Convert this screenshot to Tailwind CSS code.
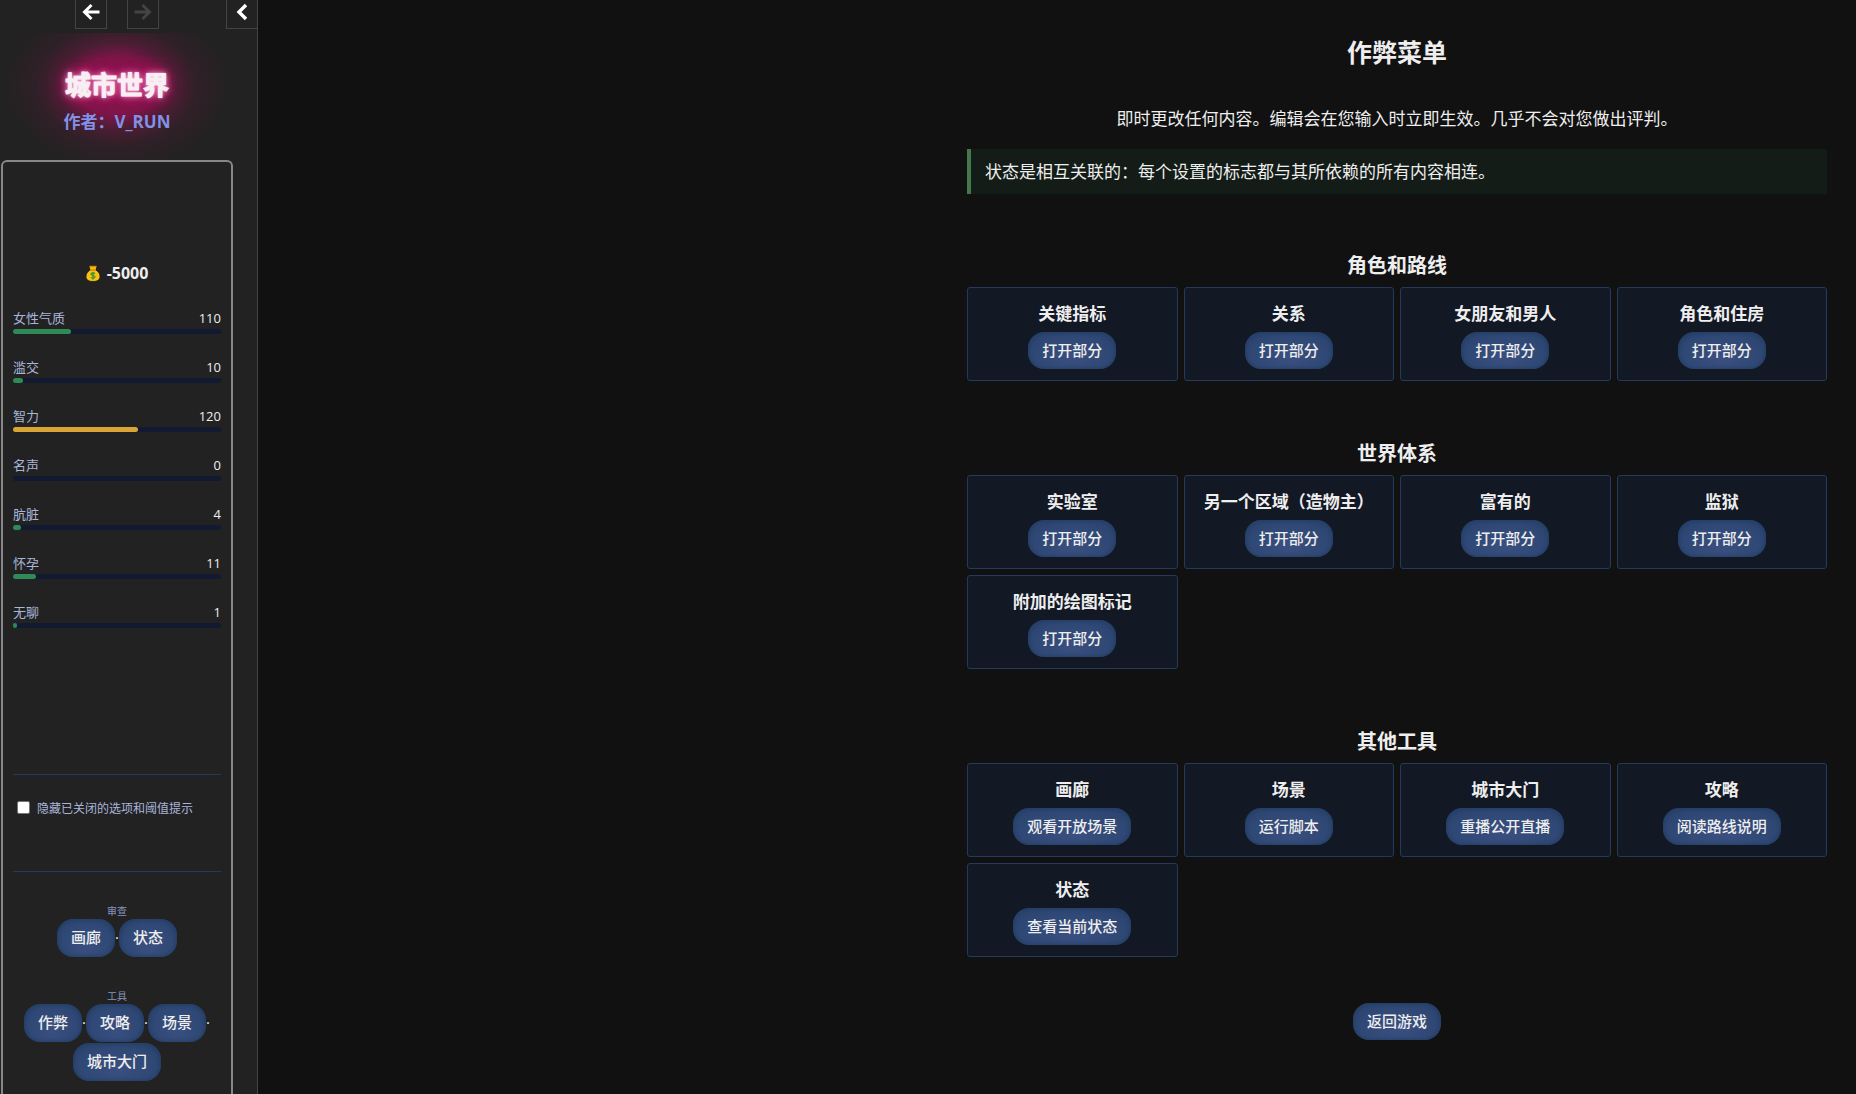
<!DOCTYPE html>
<html lang="zh-CN">
<head>
    <meta charset="UTF-8">
    <meta name="viewport" content="width=device-width, initial-scale=1.0">
    <title>城市世界</title>
    <script src="https://cdn.jsdelivr.net/npm/@tailwindcss/browser@4"></script>
    <style>
        body { font-family: "Open Sans", "Noto Sans CJK SC", sans-serif; }
        .neon { text-shadow: 0 0 2px #fff, 0 0 6px #ffc0dc, 0 0 12px #d8187a, 0 0 20px #c8106c; -webkit-text-stroke: 1px #f8eef4; }
        .glow { background: radial-gradient(ellipse 115px 85px at 117px 53px, #a8125ccc 0%, #a01258b3 35%, #8c165066 50%, #7018402b 70%, #60202000 100%); }
        .pill { background: radial-gradient(ellipse at 50% 70%, #3a4f80 0%, #2f4875 60%, #27406a 100%); box-shadow: inset 0 0 4px #1f3a5c; }
    </style>
</head>
<body class="bg-[#111] text-[#eee] flex h-screen overflow-hidden">
    <!-- 侧边栏 -->
    <aside class="w-[258px] shrink-0 bg-[#222] border-r border-[#444] flex flex-col overflow-hidden">
        <div class="flex h-[29px] shrink-0 pl-[75px]">
            <button aria-label="后退" class="w-8 border border-t-0 border-[#444] flex items-center justify-center pb-1">
                <svg class="size-[18px]" viewBox="0 0 18 18" fill="none" stroke="#fff" stroke-width="3"><path d="M17.500 9H3M9.5 2 2.5 9l7 7"/></svg>
            </button>
            <button aria-label="前进" disabled class="w-8 ml-5 border border-t-0 border-[#444] flex items-center justify-center pb-1">
                <svg class="size-[18px]" viewBox="0 0 18 18" fill="none" stroke="#444" stroke-width="3"><path d="M.5 9H15M8.5 2l7 7-7 7"/></svg>
            </button>
            <button aria-label="收起侧栏" class="w-[31px] ml-auto border border-t-0 border-r-0 border-[#444] flex items-center justify-center pb-1">
                <svg class="size-[18px]" viewBox="0 0 18 18" fill="none" stroke="#fff" stroke-width="3.4"><path d="M13 2 6 9l7 7"/></svg>
            </button>
        </div>

        <header class="glow mt-1 h-[127px] shrink-0 w-[234px] text-center pt-9">
            <h1 class="neon text-[26px] leading-8 font-bold text-[#f8eef4]">城市世界</h1>
            <p class="relative mt-[7px] text-[17px] leading-7 font-bold text-[#8290e6]">作者：V_RUN</p>
        </header>

        <div class="relative grow w-[232px] ml-px border-2 border-b-0 border-[#888] rounded-t-md px-[10px] pt-[95px]">
            <div class="flex items-center justify-center gap-[7px] h-8 text-base font-bold">
                <svg class="w-[14px] h-[17px]" viewBox="0 0 14 17"><path d="M3 1h8l-1 4c3 2 4 4 4 6.500C14 15 11.500 16.500 7 16.500S0 15 0 11.500C0 9 1 7 4 5z" fill="#f5c211" stroke="#111" stroke-width=".8"/><path d="M3.500 1.500h7M4 5h6" stroke="#d98a10" stroke-width="1.500"/><path d="M9 8.500c-1-1-4-1-4 .6 0 1.800 4 1 4 2.700 0 1.600-3 1.700-4 .6M7 7v7.500" fill="none" stroke="#388e3c" stroke-width="1.200"/></svg>
                <span>-5000</span>
            </div>

            <div class="mt-[19px] flex flex-col gap-[23px] text-[13px] leading-5">
                <div>
                    <div class="mb-px flex justify-between"><span class="text-[#a9b6dc]">女性气质</span><span>110</span></div>
                    <div class="h-[5px] rounded-full bg-[#111a30]"><div class="h-full rounded-full bg-[#2e8b57]" style="width:28%"></div></div>
                </div>
                <div>
                    <div class="mb-px flex justify-between"><span class="text-[#a9b6dc]">滥交</span><span>10</span></div>
                    <div class="h-[5px] rounded-full bg-[#111a30]"><div class="h-full rounded-full bg-[#2e8b57]" style="width:5%"></div></div>
                </div>
                <div>
                    <div class="mb-px flex justify-between"><span class="text-[#a9b6dc]">智力</span><span>120</span></div>
                    <div class="h-[5px] rounded-full bg-[#111a30]"><div class="h-full rounded-full bg-[#d9a534]" style="width:60%"></div></div>
                </div>
                <div>
                    <div class="mb-px flex justify-between"><span class="text-[#a9b6dc]">名声</span><span>0</span></div>
                    <div class="h-[5px] rounded-full bg-[#111a30]"></div>
                </div>
                <div>
                    <div class="mb-px flex justify-between"><span class="text-[#a9b6dc]">肮脏</span><span>4</span></div>
                    <div class="h-[5px] rounded-full bg-[#111a30]"><div class="h-full rounded-full bg-[#2e8b57]" style="width:4%"></div></div>
                </div>
                <div>
                    <div class="mb-px flex justify-between"><span class="text-[#a9b6dc]">怀孕</span><span>11</span></div>
                    <div class="h-[5px] rounded-full bg-[#111a30]"><div class="h-full rounded-full bg-[#2e8b57]" style="width:11%"></div></div>
                </div>
                <div>
                    <div class="mb-px flex justify-between"><span class="text-[#a9b6dc]">无聊</span><span>1</span></div>
                    <div class="h-[5px] rounded-full bg-[#111a30]"><div class="h-full rounded-full bg-[#2e8b57]" style="width:2%"></div></div>
                </div>
            </div>

            <div class="mt-[146px] h-[98px] border-y border-[#26385f] pt-6">
                <label class="flex items-center gap-[7px] pl-1 text-xs leading-5 text-[#a9b6dc]">
                    <input type="checkbox" class="size-[13px] mb-1 appearance-none rounded-[2px] bg-white border border-[#767676] checked:bg-blue-500">
                    隐藏已关闭的选项和阈值提示
                </label>
            </div>

            <nav class="mt-[31px] text-center">
                <div class="text-[10px] leading-4 text-[#8394c0]">审查</div>
                <div class="flex justify-center gap-y-px text-[15px] leading-9 font-medium">
                    <button class="pill h-[38px] px-[14px] pb-[2px] rounded-2xl">画廊</button><span class="w-1">·</span>
                    <button class="pill h-[38px] px-[14px] pb-[2px] rounded-2xl">状态</button>
                </div>
            </nav>
            <nav class="mt-[31px] text-center">
                <div class="text-[10px] leading-4 text-[#8394c0]">工具</div>
                <div class="flex flex-wrap justify-center gap-y-px text-[15px] leading-9 font-medium">
                    <button class="pill h-[38px] px-[14px] pb-[2px] rounded-2xl">作弊</button><span class="w-1">·</span>
                    <button class="pill h-[38px] px-[14px] pb-[2px] rounded-2xl">攻略</button><span class="w-1">·</span>
                    <button class="pill h-[38px] px-[14px] pb-[2px] rounded-2xl">场景</button><span class="w-1">·</span>
                    <button class="pill h-[38px] px-[14px] pb-[2px] rounded-2xl">城市大门</button>
                </div>
            </nav>
        </div>
    </aside>

    <!-- 主内容 -->
    <main class="grow overflow-hidden pr-[29px]">
        <div class="ml-auto w-full max-w-[860px] pt-8 text-center text-[17px] leading-7">
            <h1 class="text-[25px] leading-10 font-bold">作弊菜单</h1>
            <p class="mt-[33px]">即时更改任何内容。编辑会在您输入时立即生效。几乎不会对您做出评判。</p>
            <div class="mt-4 h-[45px] border-l-4 border-[#45774c] bg-[#131c16] pl-[14px] text-left leading-[45px]">状态是相互关联的：每个设置的标志都与其所依赖的所有内容相连。</div>

            <section class="mt-[58px]">
                <h2 class="mb-[7px] text-[20px] leading-7 font-bold">角色和路线</h2>
                <div class="grid grid-cols-4 gap-[6px]">
                    <div class="border border-[#233a5c] rounded-[3px] bg-[#121824] pt-3 pb-[11px]">
                        <h3 class="font-bold">关键指标</h3>
                        <button class="pill block mx-auto mt-1 h-[37px] px-[14px] pb-[2px] rounded-2xl text-[15px] font-medium">打开部分</button>
                    </div>
                    <div class="border border-[#233a5c] rounded-[3px] bg-[#121824] pt-3 pb-[11px]">
                        <h3 class="font-bold">关系</h3>
                        <button class="pill block mx-auto mt-1 h-[37px] px-[14px] pb-[2px] rounded-2xl text-[15px] font-medium">打开部分</button>
                    </div>
                    <div class="border border-[#233a5c] rounded-[3px] bg-[#121824] pt-3 pb-[11px]">
                        <h3 class="font-bold">女朋友和男人</h3>
                        <button class="pill block mx-auto mt-1 h-[37px] px-[14px] pb-[2px] rounded-2xl text-[15px] font-medium">打开部分</button>
                    </div>
                    <div class="border border-[#233a5c] rounded-[3px] bg-[#121824] pt-3 pb-[11px]">
                        <h3 class="font-bold">角色和住房</h3>
                        <button class="pill block mx-auto mt-1 h-[37px] px-[14px] pb-[2px] rounded-2xl text-[15px] font-medium">打开部分</button>
                    </div>
                </div>
            </section>

            <section class="mt-[59px]">
                <h2 class="mb-[7px] text-[20px] leading-7 font-bold">世界体系</h2>
                <div class="grid grid-cols-4 gap-[6px]">
                    <div class="border border-[#233a5c] rounded-[3px] bg-[#121824] pt-3 pb-[11px]">
                        <h3 class="font-bold">实验室</h3>
                        <button class="pill block mx-auto mt-1 h-[37px] px-[14px] pb-[2px] rounded-2xl text-[15px] font-medium">打开部分</button>
                    </div>
                    <div class="border border-[#233a5c] rounded-[3px] bg-[#121824] pt-3 pb-[11px]">
                        <h3 class="font-bold">另一个区域（造物主）</h3>
                        <button class="pill block mx-auto mt-1 h-[37px] px-[14px] pb-[2px] rounded-2xl text-[15px] font-medium">打开部分</button>
                    </div>
                    <div class="border border-[#233a5c] rounded-[3px] bg-[#121824] pt-3 pb-[11px]">
                        <h3 class="font-bold">富有的</h3>
                        <button class="pill block mx-auto mt-1 h-[37px] px-[14px] pb-[2px] rounded-2xl text-[15px] font-medium">打开部分</button>
                    </div>
                    <div class="border border-[#233a5c] rounded-[3px] bg-[#121824] pt-3 pb-[11px]">
                        <h3 class="font-bold">监狱</h3>
                        <button class="pill block mx-auto mt-1 h-[37px] px-[14px] pb-[2px] rounded-2xl text-[15px] font-medium">打开部分</button>
                    </div>
                    <div class="border border-[#233a5c] rounded-[3px] bg-[#121824] pt-3 pb-[11px]">
                        <h3 class="font-bold">附加的绘图标记</h3>
                        <button class="pill block mx-auto mt-1 h-[37px] px-[14px] pb-[2px] rounded-2xl text-[15px] font-medium">打开部分</button>
                    </div>
                </div>
            </section>

            <section class="mt-[59px]">
                <h2 class="mb-[7px] text-[20px] leading-7 font-bold">其他工具</h2>
                <div class="grid grid-cols-4 gap-[6px]">
                    <div class="border border-[#233a5c] rounded-[3px] bg-[#121824] pt-3 pb-[11px]">
                        <h3 class="font-bold">画廊</h3>
                        <button class="pill block mx-auto mt-1 h-[37px] px-[14px] pb-[2px] rounded-2xl text-[15px] font-medium">观看开放场景</button>
                    </div>
                    <div class="border border-[#233a5c] rounded-[3px] bg-[#121824] pt-3 pb-[11px]">
                        <h3 class="font-bold">场景</h3>
                        <button class="pill block mx-auto mt-1 h-[37px] px-[14px] pb-[2px] rounded-2xl text-[15px] font-medium">运行脚本</button>
                    </div>
                    <div class="border border-[#233a5c] rounded-[3px] bg-[#121824] pt-3 pb-[11px]">
                        <h3 class="font-bold">城市大门</h3>
                        <button class="pill block mx-auto mt-1 h-[37px] px-[14px] pb-[2px] rounded-2xl text-[15px] font-medium">重播公开直播</button>
                    </div>
                    <div class="border border-[#233a5c] rounded-[3px] bg-[#121824] pt-3 pb-[11px]">
                        <h3 class="font-bold">攻略</h3>
                        <button class="pill block mx-auto mt-1 h-[37px] px-[14px] pb-[2px] rounded-2xl text-[15px] font-medium">阅读路线说明</button>
                    </div>
                    <div class="border border-[#233a5c] rounded-[3px] bg-[#121824] pt-3 pb-[11px]">
                        <h3 class="font-bold">状态</h3>
                        <button class="pill block mx-auto mt-1 h-[37px] px-[14px] pb-[2px] rounded-2xl text-[15px] font-medium">查看当前状态</button>
                    </div>
                </div>
            </section>

            <button class="pill block mx-auto mt-[46px] h-[37px] px-[14px] pb-[2px] rounded-2xl text-[15px] font-medium">返回游戏</button>
        </div>
    </main>
</body>
</html>
